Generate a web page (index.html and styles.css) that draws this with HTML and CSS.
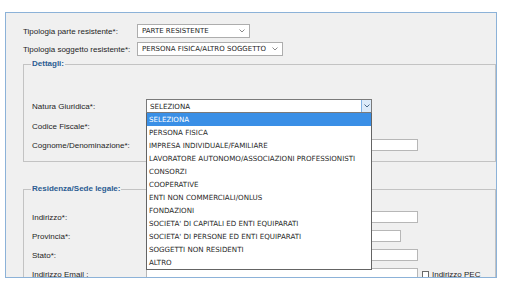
FILE: index.html
```html
<!DOCTYPE html>
<html lang="it">
<head>
<meta charset="utf-8">
<link rel="stylesheet" href="styles.css">
</head>
<body>
<div class="panel">
  <div class="top-row">
    <span class="lbl">Tipologia parte resistente*:</span>
    <div class="sel sel-a"><span>PARTE RESISTENTE</span><svg class="chev" width="6" height="4" viewBox="0 0 6 4"><polyline points="0.5,0.5 3,3 5.5,0.5" fill="none" stroke="#8a8a8a" stroke-width="1"/></svg></div>
  </div>
  <div class="top-row">
    <span class="lbl">Tipologia soggetto resistente*:</span>
    <div class="sel sel-b"><span>PERSONA FISICA/ALTRO SOGGETTO</span><svg class="chev" width="6" height="4" viewBox="0 0 6 4"><polyline points="0.5,0.5 3,3 5.5,0.5" fill="none" stroke="#8a8a8a" stroke-width="1"/></svg></div>
  </div>

  <fieldset class="group g-det">
    <legend>Dettagli:</legend>
    <div class="frow tall">
      <span class="lbl">Natura Giuridica*:</span>
      <div class="combo">
        <span class="combo-text">SELEZIONA</span>
        <span class="combo-btn"><svg width="6" height="4" viewBox="0 0 6 4"><polyline points="0.5,0.5 3,3 5.5,0.5" fill="none" stroke="#4a6a8a" stroke-width="1"/></svg></span>
        <ul class="list">
          <li class="hl">SELEZIONA</li>
          <li>PERSONA FISICA</li>
          <li>IMPRESA INDIVIDUALE/FAMILIARE</li>
          <li>LAVORATORE AUTONOMO/ASSOCIAZIONI PROFESSIONISTI</li>
          <li>CONSORZI</li>
          <li>COOPERATIVE</li>
          <li>ENTI NON COMMERCIALI/ONLUS</li>
          <li>FONDAZIONI</li>
          <li>SOCIETA' DI CAPITALI ED ENTI EQUIPARATI</li>
          <li>SOCIETA' DI PERSONE ED ENTI EQUIPARATI</li>
          <li>SOGGETTI NON RESIDENTI</li>
          <li>ALTRO</li>
        </ul>
      </div>
    </div>
    <div class="frow">
      <span class="lbl">Codice Fiscale*:</span>
      <span class="inp w-cf"></span>
    </div>
    <div class="frow">
      <span class="lbl">Cognome/Denominazione*:</span>
      <span class="inp w-long"></span>
    </div>
  </fieldset>

  <fieldset class="group g-res">
    <legend>Residenza/Sede legale:</legend>
    <div class="frow">
      <span class="lbl">Indirizzo*:</span>
      <span class="inp w-long"></span>
    </div>
    <div class="frow">
      <span class="lbl">Provincia*:</span>
      <span class="inp w-prov"></span>
    </div>
    <div class="frow">
      <span class="lbl">Stato*:</span>
      <span class="inp w-long"></span>
    </div>
    <div class="frow">
      <span class="lbl">Indirizzo Email :</span>
      <span class="inp w-long"></span>
      <span class="chk"></span>
      <span class="chk-lbl">Indirizzo PEC</span>
    </div>
  </fieldset>
</div>
</body>
</html>
```

FILE: styles.css
```css
body {
  margin: 0;
  background: #ffffff;
  font-family: "Liberation Sans", Arial, sans-serif;
}

.panel {
  box-sizing: border-box;
  margin: 12px 0 0 5px;
  width: 492px;
  height: 266px;
  border: 1px solid #8cb2d8;
  background: #f0f0f0;
  overflow: hidden;
  padding: 11px 0 0 17px;
}

.lbl {
  font-size: 8px;
  color: #1e1e1e;
  white-space: nowrap;
}

.top-row {
  display: flex;
  align-items: center;
  height: 14px;
}

.top-row + .top-row {
  margin-top: 4px;
}

.top-row .lbl {
  width: 114px;
  flex: none;
}

.sel {
  box-sizing: border-box;
  height: 14px;
  border: 1px solid #adadad;
  background: #fff;
  display: flex;
  align-items: center;
  justify-content: space-between;
  padding: 0 4px 0 4px;
  font-family: "DejaVu Sans", sans-serif;
  font-size: 7px;
  color: #1e1e1e;
  white-space: nowrap;
}

.sel-a { width: 113px; }
.sel-b { width: 146px; }

.chev { display: block; }

fieldset.group {
  margin: 3px 0 0 0;
  padding: 30px 0 10px 8px;
  border: 1px solid #c3c3c3;
  min-width: 0;
}

.group legend {
  font-size: 8px;
  font-weight: bold;
  color: #2b5c92;
  line-height: 10px;
  padding: 0 1px;
  margin-left: -1px;
}

fieldset.g-res {
  margin-top: 22px;
  padding-top: 17px;
}

.frow {
  display: flex;
  align-items: center;
  height: 12px;
}

.frow.tall { height: 14px; }

.frow + .frow { margin-top: 7px; }

.frow .lbl {
  width: 114px;
  flex: none;
}

.inp {
  box-sizing: border-box;
  height: 12px;
  border: 1px solid #b7b7b7;
  background: #fff;
  flex: none;
}

.w-cf { width: 160px; }
.w-long { width: 272px; }
.w-prov { width: 255px; }

.chk {
  box-sizing: border-box;
  width: 7px;
  height: 7px;
  margin-left: 4px;
  border: 1px solid #6a6a6a;
  background: #fff;
  flex: none;
}

.chk-lbl {
  margin-left: 3px;
  font-size: 8px;
  color: #1e1e1e;
  white-space: nowrap;
}

.combo {
  position: relative;
  z-index: 5;
  box-sizing: border-box;
  width: 226px;
  height: 14px;
  border: 1px solid #7a7a7a;
  background: #fff;
  display: flex;
  align-items: center;
  font-family: "DejaVu Sans", sans-serif;
  font-size: 7.1px;
  color: #1e1e1e;
}

.combo-text {
  flex: 1;
  padding-left: 3px;
}

.combo-btn {
  box-sizing: border-box;
  width: 10px;
  height: 12px;
  background: #dcebfa;
  border-left: 1px solid #7fb2e6;
  display: flex;
  align-items: center;
  justify-content: center;
}

.list {
  position: absolute;
  top: 13px;
  left: -1px;
  box-sizing: border-box;
  width: 226px;
  margin: 0;
  padding: 0;
  list-style: none;
  background: #fff;
  border: 1px solid #646464;
  border-top: 0;
}

.list li {
  height: 13px;
  line-height: 13px;
  padding-left: 2px;
  color: #2a2a2a;
  white-space: nowrap;
}

.list li.hl {
  background: #3a8fe6;
  color: #fff;
}
```
